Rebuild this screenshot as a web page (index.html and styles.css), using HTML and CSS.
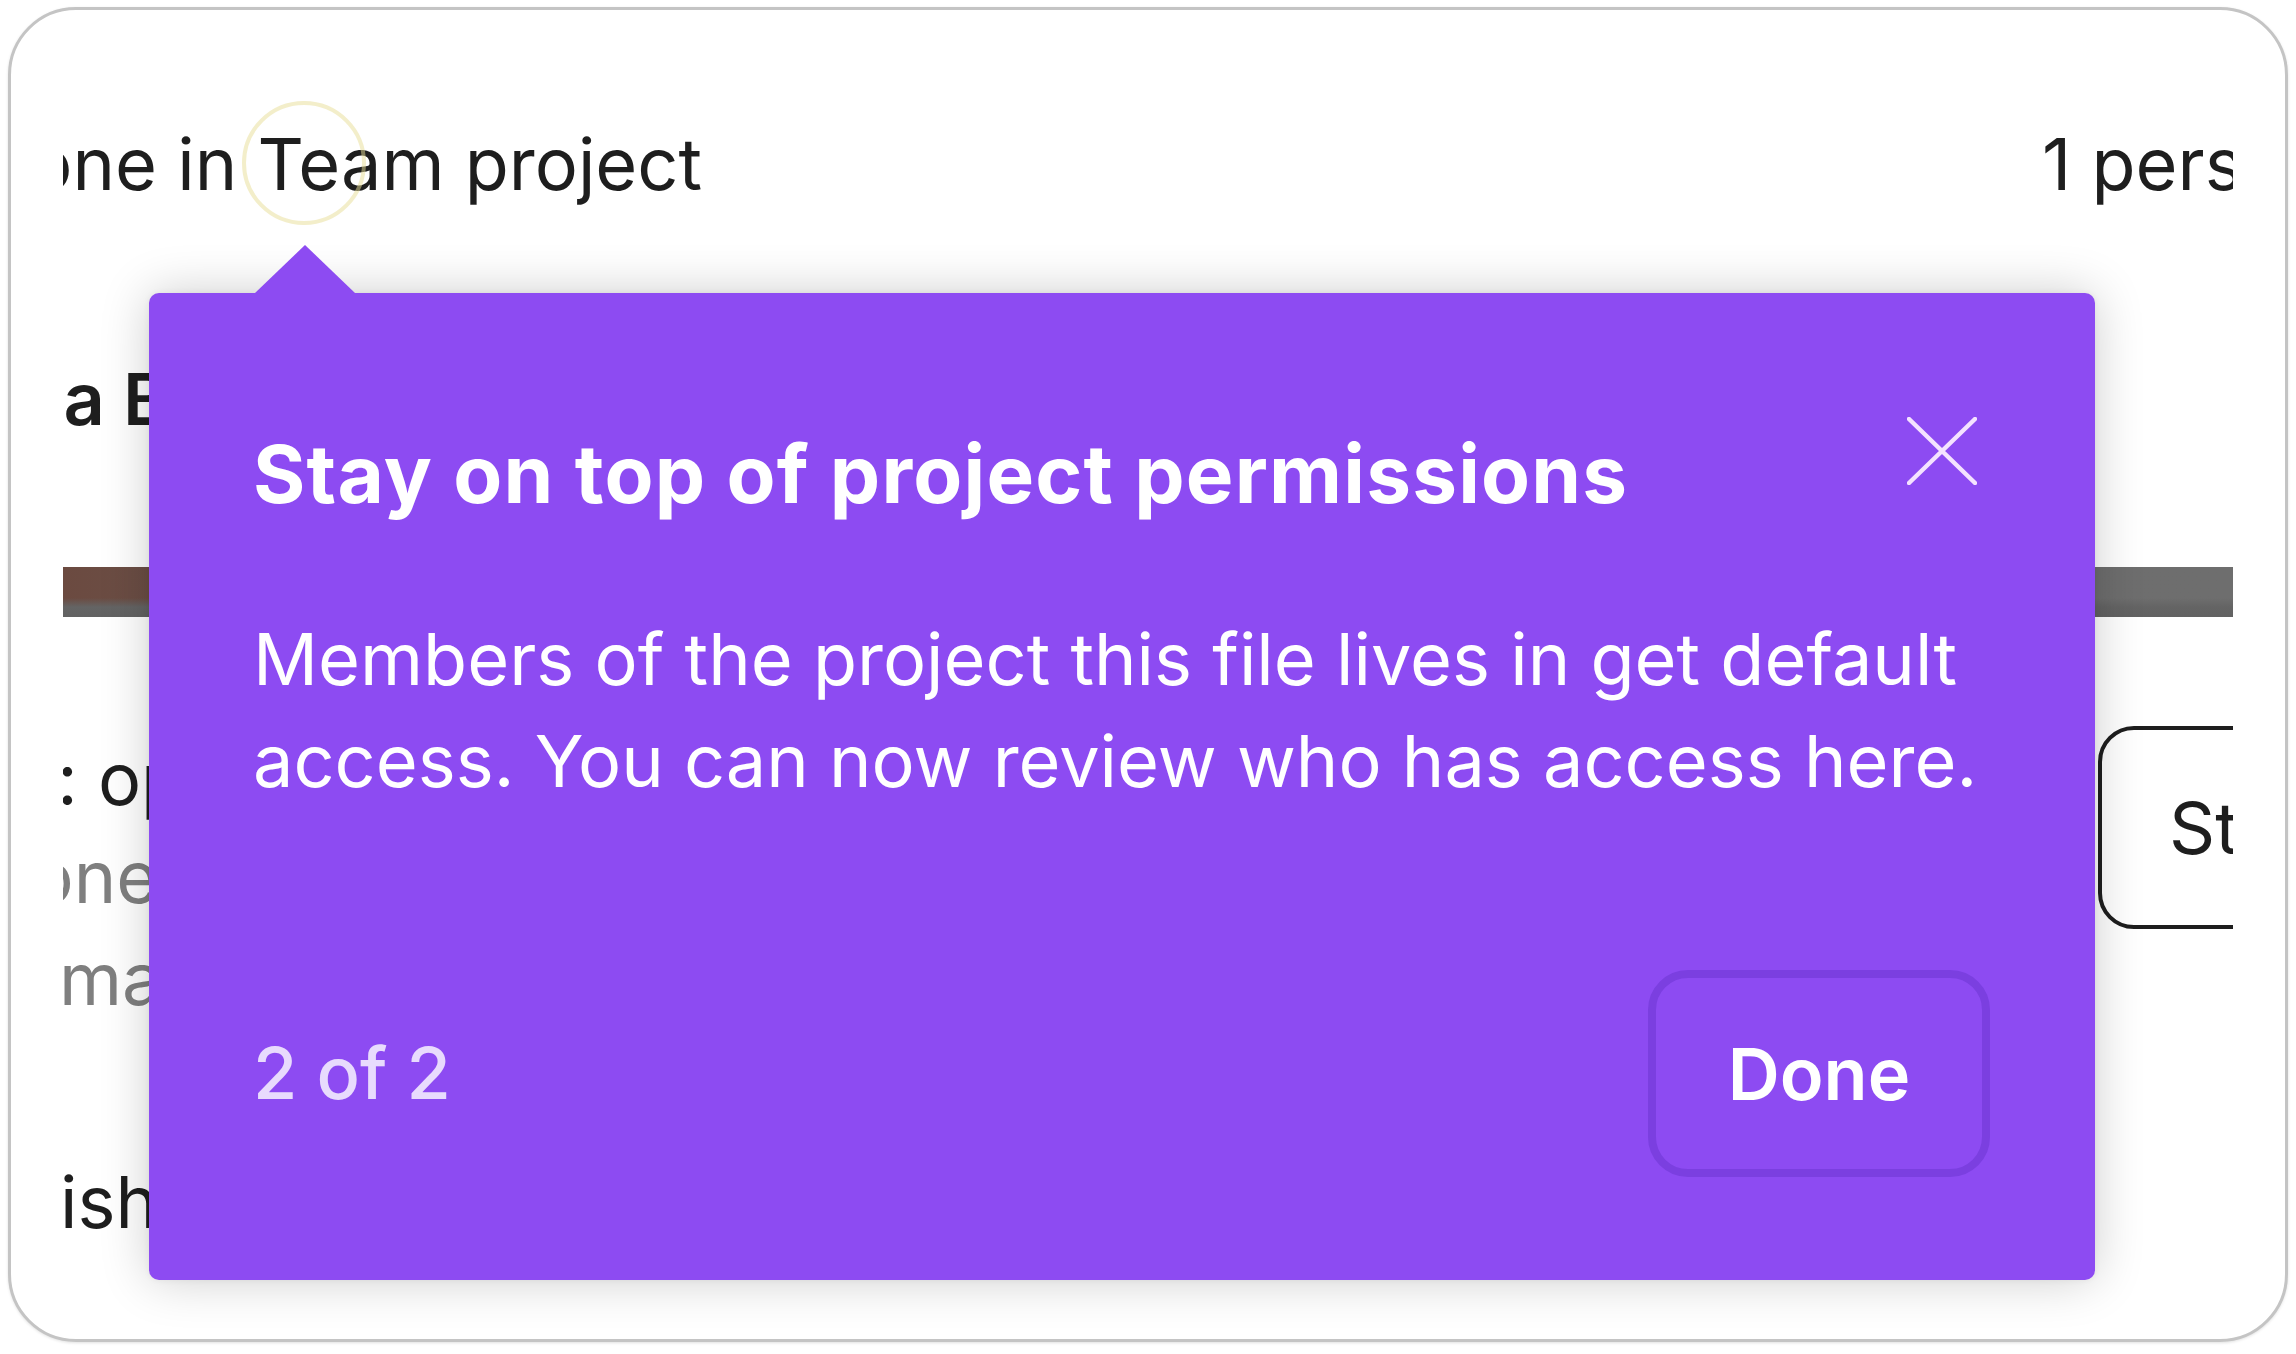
FILE: index.html
```html
<!DOCTYPE html>
<html lang="en">
<head>
    <meta charset="UTF-8">
    <meta name="viewport" content="width=device-width, initial-scale=1.0">
    <title>Share file</title>
    <link rel="stylesheet" href="styles.css">
</head>
<body>
    <div class="card">
        <div class="sheet">
            <div class="access-row">
                <div class="who">
                    <span>Everyone in Team project</span>
                    <span class="ring"></span>
                </div>
                <div class="count">1 person</div>
            </div>

            <div class="line member">Dana Bailey</div>

            <div class="bar"></div>

            <div class="setting">
                <div class="setting-text">
                    <div class="line setting-title">Access: open to everyone</div>
                    <div class="line setting-desc desc-first">Everyone in Team project can view and</div>
                    <div class="line setting-desc desc-second">make changes to this file</div>
                </div>
                <div class="setting-action">
                    <button class="btn-outline">Stop sharing</button>
                </div>
            </div>

            <div class="line publish">Publish</div>
        </div>

        <div class="coachmark" role="dialog">
            <div class="coach-head">
                <h2>Stay on top of project permissions</h2>
                <button class="coach-close" aria-label="Close">
                    <svg width="70" height="68" viewBox="0 0 70 68">
                        <path d="M2 2 L68 66 M68 2 L2 66" stroke="currentColor" stroke-width="4.5" stroke-linecap="round" fill="none"/>
                    </svg>
                </button>
            </div>
            <p class="coach-body">Members of the project this file lives in get default access. You can now review who has access here.</p>
            <div class="coach-foot">
                <span class="coach-step">2 of 2</span>
                <button class="coach-done">Done</button>
            </div>
        </div>
    </div>
</body>
</html>
```

FILE: styles.css
```css
body {
    margin: 0;
    padding: 7px 8px;
    background: #fff;
    font-family: Inter, "Noto Sans", sans-serif;
    color: #1e1e1e;
}
.card {
    position: relative;
    box-sizing: border-box;
    height: 1335px;
    border: 3px solid #c4c4c4;
    border-radius: 68px;
    background: #fff;
    box-shadow: 0 1px 3px rgba(0, 0, 0, 0.12);
}
.sheet {
    box-sizing: border-box;
    margin-left: 52px;
    width: 2170px;
    height: 100%;
    padding-top: 103px;
    overflow: hidden;
}
.access-row {
    display: flex;
    font-size: 72px;
    line-height: 102px;
    white-space: nowrap;
}
.who {
    position: relative;
    flex-shrink: 0;
    width: 639px;
    display: flex;
    justify-content: flex-end;
}
.ring {
    position: absolute;
    left: 179px;
    top: -12px;
    width: 124px;
    height: 124px;
    box-sizing: border-box;
    border: 4px solid rgba(232, 222, 150, 0.5);
    border-radius: 50%;
}
.count {
    flex-shrink: 0;
    width: 191px;
    margin-left: auto;
}
.line {
    font-size: 72px;
    line-height: 102px;
    white-space: nowrap;
}
.member {
    margin-top: 133px;
    font-weight: 600;
    text-indent: -137px;
}
.bar {
    margin-top: 117px;
    height: 50px;
    background:
        linear-gradient(180deg, rgba(0, 0, 0, 0) 62%, #646464 80%, #626262 100%),
        linear-gradient(90deg, #6b4a40 0%, #6d6d6d 35%, #6e6e6e 100%);
}
.setting {
    margin-top: 109px;
    display: flex;
    align-items: flex-start;
}
.setting-text {
    flex: 1;
    min-width: 0;
    padding-top: 5px;
}
.setting-title {
    line-height: 95px;
    text-indent: -256px;
}
.setting-desc {
    color: #7f7f7f;
}
.desc-first {
    text-indent: -224px;
}
.desc-second {
    text-indent: -4px;
}
.setting-action {
    flex-shrink: 0;
    width: 135px;
}
.btn-outline {
    display: inline-flex;
    align-items: center;
    box-sizing: border-box;
    height: 203px;
    padding: 0 64px 0 67px;
    border: 4px solid #1e1e1e;
    border-radius: 36px;
    background: #fff;
    color: #1e1e1e;
    font-family: inherit;
    font-size: 72px;
    white-space: nowrap;
}
.publish {
    margin-top: 121px;
    text-indent: -153px;
}
.coachmark {
    position: absolute;
    left: 138px;
    top: 283px;
    box-sizing: border-box;
    width: 1946px;
    padding: 133px 105px 103px 104px;
    background: #8d4bf2;
    border-radius: 10px;
    color: #fff;
    box-shadow: 0 0 50px rgba(0, 0, 0, 0.2), 0 0 6px rgba(0, 0, 0, 0.06);
}
.coachmark::before {
    content: "";
    position: absolute;
    top: -48px;
    left: 106px;
    border-style: solid;
    border-color: transparent;
    border-width: 0 50px 48px;
    border-bottom-color: #8d4bf2;
}
.coach-head {
    display: flex;
    align-items: flex-start;
    justify-content: space-between;
}
.coach-head h2 {
    margin: 0;
    font-size: 80px;
    font-weight: 700;
    letter-spacing: 1.2px;
    line-height: 96px;
}
.coach-close {
    display: flex;
    margin: -9px 13px 0 0;
    padding: 0;
    border: 0;
    background: none;
    color: #f4e2ff;
    cursor: pointer;
}
.coach-body {
    margin: 86px 0 0;
    font-size: 72px;
    line-height: 102px;
}
.coach-foot {
    margin-top: 158px;
    display: flex;
    align-items: center;
    justify-content: space-between;
}
.coach-step {
    font-size: 72px;
    font-weight: 500;
    line-height: 1.2;
    color: rgba(255, 255, 255, 0.8);
}
.coach-done {
    box-sizing: border-box;
    width: 342px;
    height: 207px;
    border: 8px solid #7b3fe0;
    border-radius: 40px;
    background: #8d4bf2;
    color: #fff;
    font-family: inherit;
    font-size: 72px;
    font-weight: 600;
    cursor: pointer;
}
```
